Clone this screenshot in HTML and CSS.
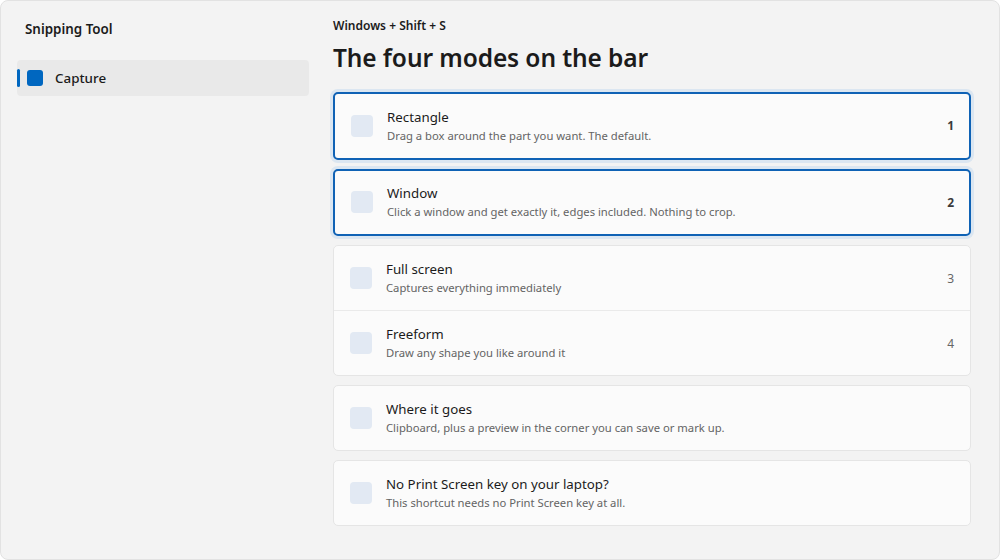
FILE: index.html
```html
<!DOCTYPE html>
<html>
<head>
<meta charset="utf-8">
<link rel="stylesheet" href="styles.css">
</head>
<body>
<div class="app">
  <aside class="sidebar">
    <div class="app-title">Snipping Tool</div>
    <nav class="nav">
      <div class="nav-item active">
        <span class="nav-accent"></span>
        <span class="nav-icon"></span>
        <span class="nav-label">Capture</span>
      </div>
    </nav>
  </aside>
  <main class="main">
    <div class="shortcut">Windows + Shift + S</div>
    <h1 class="heading">The four modes on the bar</h1>
    <div class="list">
      <div class="card selected">
        <div class="row">
          <span class="ico"></span>
          <div class="txt"><div class="title">Rectangle</div><div class="desc">Drag a box around the part you want. The default.</div></div>
          <span class="num">1</span>
        </div>
      </div>
      <div class="card selected">
        <div class="row">
          <span class="ico"></span>
          <div class="txt"><div class="title">Window</div><div class="desc">Click a window and get exactly it, edges included. Nothing to crop.</div></div>
          <span class="num">2</span>
        </div>
      </div>
      <div class="card">
        <div class="row">
          <span class="ico"></span>
          <div class="txt"><div class="title">Full screen</div><div class="desc">Captures everything immediately</div></div>
          <span class="num">3</span>
        </div>
        <div class="row divided">
          <span class="ico"></span>
          <div class="txt"><div class="title">Freeform</div><div class="desc">Draw any shape you like around it</div></div>
          <span class="num">4</span>
        </div>
      </div>
      <div class="card">
        <div class="row">
          <span class="ico"></span>
          <div class="txt"><div class="title">Where it goes</div><div class="desc">Clipboard, plus a preview in the corner you can save or mark up.</div></div>
        </div>
      </div>
      <div class="card">
        <div class="row">
          <span class="ico"></span>
          <div class="txt"><div class="title">No Print Screen key on your laptop?</div><div class="desc">This shortcut needs no Print Screen key at all.</div></div>
        </div>
      </div>
    </div>
  </main>
</div>
</body>
</html>
```

FILE: styles.css
```css
* { box-sizing: border-box; }
html, body { margin: 0; padding: 0; background: #ffffff; }
body {
  font-family: "Noto Sans", "Open Sans", "Liberation Sans", sans-serif;
  color: #1b1b1b;
}
.app {
  width: 1000px;
  height: 560px;
  background: #f3f3f3;
  border: 1px solid #e2e2e2;
  border-radius: 8px;
  display: grid;
  grid-template-columns: 316px 1fr;
  overflow: hidden;
}
.sidebar {
  padding: 19px 8px 0 16px;
}
.app-title {
  font-size: 13.4px;
  font-weight: 600;
  padding-left: 8px;
  line-height: 18px;
}
.nav { margin-top: 22px; }
.nav-item {
  position: relative;
  height: 36px;
  background: #e9e9e9;
  border-radius: 4px;
  display: flex;
  align-items: center;
  padding-left: 10px;
}
.nav-accent {
  position: absolute;
  left: 0;
  top: 9px;
  width: 3px;
  height: 18px;
  border-radius: 2px;
  background: #0067c0;
}
.nav-icon {
  width: 16px;
  height: 16px;
  border-radius: 3px;
  background: #0067c0;
}
.nav-label {
  margin-left: 12px;
  font-size: 13.4px;
  font-weight: 500;
}
.main {
  padding: 16px 28px 0 16px;
}
.shortcut {
  font-size: 12px;
  font-weight: 600;
  line-height: 18px;
}
.heading {
  margin: 6px 0 0;
  font-size: 24.5px;
  font-weight: 600;
  line-height: 34px;
  letter-spacing: -0.1px;
}
.list {
  margin-top: 17px;
  display: flex;
  flex-direction: column;
  gap: 9px;
}
.card {
  background: #fbfbfb;
  border: 1px solid #e5e5e5;
  border-radius: 5px;
}
.card.selected {
  border: 2px solid #0f62b5;
  box-shadow: 0 0 0 3px #dbe6f1;
}
.row {
  height: 64px;
  display: flex;
  align-items: center;
  padding: 0 16px 0 16px;
}
.card.selected .row { height: 63.5px; padding-right: 15px; }
.row.divided { border-top: 1px solid #eaeaea; height: 65px; }
.ico {
  width: 22px;
  height: 22px;
  border-radius: 4px;
  background: #e2e9f3;
  flex: none;
}
.txt { margin-left: 14px; flex: 1; }
.title {
  font-size: 13.3px;
  line-height: 19px;
  color: #1b1b1b;
}
.desc {
  font-size: 11.25px;
  line-height: 17px;
  color: #646464;
}
.num {
  font-size: 12px;
  color: #666;
}
.card.selected .num { font-weight: 700; color: #3a3a3a; }
```
